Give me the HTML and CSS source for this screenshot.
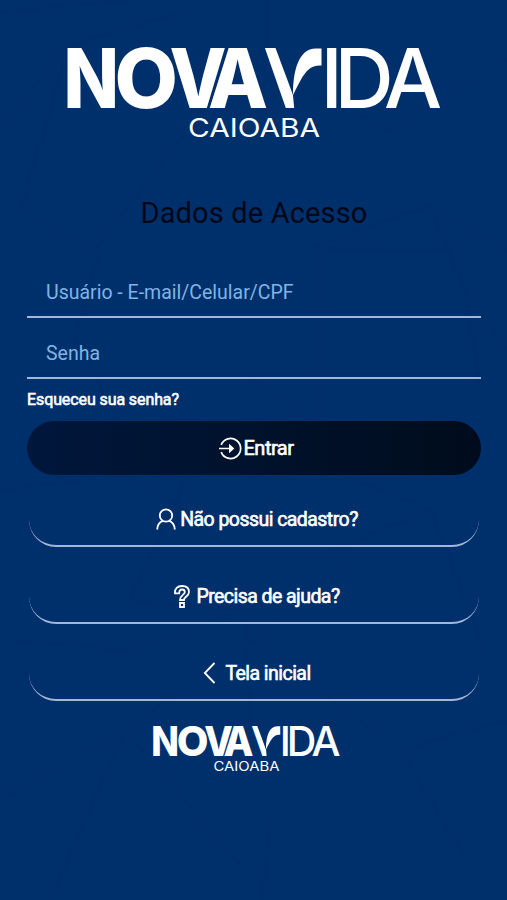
FILE: index.html
```
<!DOCTYPE html>
<html lang="pt-BR">
<head>
    <meta charset="UTF-8">
    <meta name="viewport" content="width=device-width, initial-scale=1.0">
    <title>Nova Vida Caioaba</title>
    <link rel="stylesheet" href="styles.css">
</head>
<body>

    <!-- Background lines -->
    <svg class="bg-lines" viewBox="0 0 507 900" aria-hidden="true">
        <path d="M0 12L130 0M0 125L70 45L190 10M70 45L20 210L95 250L230 75M265 0V75L390 130L507 60M310 248L430 205L507 250M310 248L460 249M320 248V430L250 375M430 205L465 290L507 350M465 290L480 385M100 250L75 340L125 430M0 490L125 475L200 520M190 470L130 600L245 610L250 720M10 640L125 650L245 610M330 470L430 510L485 650M310 560L430 510M0 800L125 730L250 640L350 560M125 730L50 900M125 730L240 865M270 820L262 900M250 640L400 750L507 720M400 750L470 865"/>
    </svg>

    <div id="login">
        <!-- Logo -->
        <svg class="logo" viewBox="67 46 374 93">
            <defs>
                <clipPath id="v-arm">
                    <path d="M255 40H272L275.500 48L293 95L294.500 112H255Z"/>
                </clipPath>
            </defs>
            <g id="logo-art">
                <text class="nova" y="108" x="63.500" textLength="55.500" lengthAdjust="spacingAndGlyphs">N</text>
                <text class="nova" y="108" x="114.500" textLength="63.500" lengthAdjust="spacingAndGlyphs">O</text>
                <text class="nova" y="108" x="169.500" textLength="57" lengthAdjust="spacingAndGlyphs">V</text>
                <text class="nova" y="108" x="208" textLength="60" lengthAdjust="spacingAndGlyphs">A</text>
                <text class="nova vida-v" y="108" x="263" clip-path="url(#v-arm)">V</text>
                <path d="M293 95C293 72 298 48.500 316 48.500H321.500V65.500C306 64 301 80 293 95Z"/>
                <text class="vida" y="108" x="320.500 334.500 384">IDA</text>
                <text class="place" y="137" x="188" textLength="132" lengthAdjust="spacingAndGlyphs">CAIOABA</text>
            </g>
        </svg>

        <h1>Dados de Acesso</h1>

        <!-- Login Form -->
        <form id="login-form">
            <input type="text" id="username" placeholder="Usuário - E-mail/Celular/CPF">
            <input type="password" id="password" placeholder="Senha">
            <a class="forgot" href="#">Esqueceu sua senha?</a>

            <button type="button" class="btn btn-primary">
                <svg class="icon-enter" viewBox="0 0 24 24">
                    <path d="M2.300 8.200A10.500 10.500 0 1 1 2.300 15.800M0 12H14"/>
                    <path class="fill" d="M10.500 7L16 12L10.500 17Z"/>
                </svg>
                <span>Entrar</span>
            </button>
            <button type="button" class="btn btn-line">
                <svg class="icon-user" viewBox="0 0 20 22">
                    <circle cx="10" cy="7.500" r="6.200"/>
                    <path d="M1.200 21.500C1.500 16.500 4 13.800 7 12.900M18.800 21.500C18.500 16.500 16 13.800 13 12.900"/>
                </svg>
                <span>Não possui cadastro?</span>
            </button>
            <button type="button" class="btn btn-line">
                <svg class="icon-help" viewBox="0 0 16 23">
                    <path d="M1 8.300C.6 3.500 3.500 1 8 1C12.500 1 15 3.500 15 7C15 11.500 10 11.500 10 15H6C6 10 10.800 10 10.800 7C10.800 5.500 9.800 4.500 8 4.500C6 4.500 5.200 5.700 5.200 8.300ZM6 18H10V22H6Z"/>
                </svg>
                <span>Precisa de ajuda?</span>
            </button>
            <button type="button" class="btn btn-line">
                <svg class="icon-back" viewBox="0 0 12 22">
                    <path d="M11 1L1.300 11L11 21"/>
                </svg>
                <span>Tela inicial</span>
            </button>
        </form>

        <svg class="logo-small" viewBox="67 46 374 93">
            <use href="#logo-art"/>
        </svg>
    </div>

</body>
</html>
```
FILE: styles.css
```
* {
    box-sizing: border-box;
}

body {
    font-family: Roboto, "Liberation Sans", sans-serif;
    background-color: #00306c;
    color: #fff;
    margin: 0;
    height: 100vh;
    overflow: hidden;
}

.bg-lines {
    position: absolute;
    top: 0;
    left: 0;
    width: 100%;
    height: 100%;
    z-index: -1;
    fill: none;
    stroke: #001b50;
    stroke-width: 3;
    opacity: 0.08;
}

#login {
    display: flex;
    flex-direction: column;
    padding: 46px 26px 0 27px;
}

.logo, .logo-small {
    fill: #fff;
    overflow: visible;
}

.logo {
    width: 374px;
    height: 93px;
    margin-left: 40px;
}

.logo-small {
    width: 187px;
    height: 46.5px;
    margin: 24px 0 0 126px;
}

.nova, .vida, .place {
    font-family: Inter, "Liberation Sans", sans-serif;
    font-size: 82px;
    font-weight: 800;
}

.vida-v {
    font-weight: 700;
}

.vida {
    font-weight: 500;
}

.place {
    font-size: 25px;
    font-weight: 400;
}

h1 {
    color: #000818;
    font-size: 29px;
    font-weight: 400;
    line-height: 34px;
    letter-spacing: 0.15px;
    text-align: center;
    margin: 57px 0 38px;
}

#login-form {
    display: flex;
    flex-direction: column;
}

input {
    width: 100%;
    height: 50px;
    margin-bottom: 11px;
    padding: 1px 19px 0;
    background: none;
    border: none;
    border-bottom: 2px solid #a3b7d6;
    color: #fff;
    font-family: inherit;
    font-size: 19.5px;
}

input::placeholder {
    color: #80b4e4;
    opacity: 1;
}

.forgot {
    margin-bottom: 11px;
    color: #fff;
    font-size: 16px;
    line-height: 20px;
    letter-spacing: -0.1px;
    text-decoration: none;
    -webkit-text-stroke: 0.6px #fff;
}

.btn {
    display: flex;
    justify-content: center;
    align-items: center;
    height: 54px;
    padding: 0 0 0 6px;
    border: none;
    border-radius: 27px;
    background: none;
    color: #fff;
    font-family: inherit;
    font-size: 19.5px;
    letter-spacing: -0.55px;
    -webkit-text-stroke: 0.6px #fff;
}

.btn svg {
    fill: none;
    stroke: #fff;
    stroke-width: 1.8;
}

.btn-primary {
    padding-left: 4px;
    background: linear-gradient(90deg, #00173c, #000c1c);
    font-size: 20px;
    letter-spacing: -0.5px;
}

.btn-line {
    margin: 18px 2px 0;
    border-bottom: 2px solid #a3b7d6;
}

.btn-line + .btn-line {
    margin-top: 23px;
}

.icon-enter {
    width: 23px;
    height: 23px;
    margin-right: 2px;
}

.btn .fill {
    fill: #fff;
    stroke: none;
}

.icon-user {
    width: 20px;
    height: 22px;
    margin-right: 4px;
}

.icon-help {
    width: 16px;
    height: 23px;
    margin-right: 6px;
}

.icon-back {
    width: 13px;
    height: 22px;
    margin-right: 9px;
}
```
